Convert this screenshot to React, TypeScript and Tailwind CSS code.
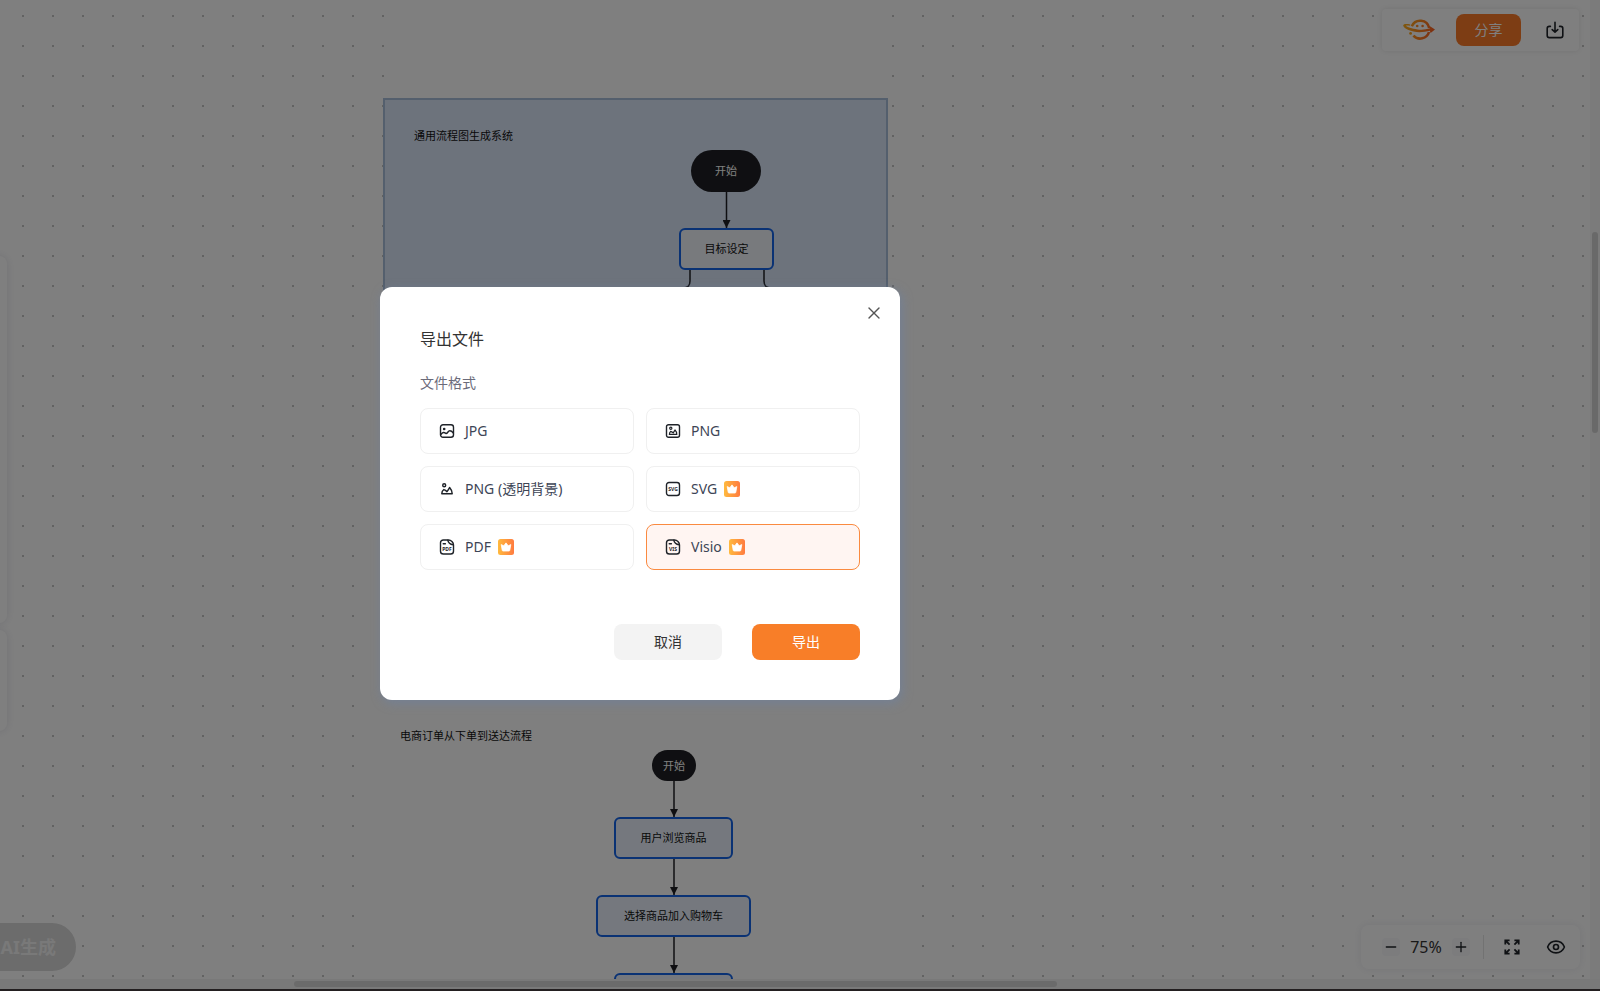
import { useState } from "react";
import type { ReactNode } from "react";
import { Eye, Minus, Plus, X } from "lucide-react";
import clsx from "clsx";

interface FlowNode {
  id: string;
  label: string;
  className: string;
}

interface ExportFormat {
  id: string;
  label: string;
  icon: ReactNode;
  premium?: boolean;
}

const FLOW_NODES: FlowNode[] = [
  {
    id: "start-1",
    label: "开始",
    className:
      "left-[691px] top-[150px] h-[42px] w-[70px] rounded-full bg-[#1e1f24] text-white",
  },
  {
    id: "goal",
    label: "目标设定",
    className:
      "left-[679px] top-[228px] h-[42px] w-[95px] rounded-md border-2 border-[#1464e8] bg-[#f0f4fb]",
  },
  {
    id: "start-2",
    label: "开始",
    className:
      "left-[652px] top-[750px] h-[31px] w-[44px] rounded-full bg-[#1e1f24] text-white",
  },
  {
    id: "browse",
    label: "用户浏览商品",
    className:
      "left-[614px] top-[817px] h-[42px] w-[119px] rounded-md border-2 border-[#1464e8] bg-[#eaf1fc]",
  },
  {
    id: "cart",
    label: "选择商品加入购物车",
    className:
      "left-[596px] top-[895px] h-[42px] w-[155px] rounded-md border-2 border-[#1464e8] bg-[#eaf1fc]",
  },
  {
    id: "next",
    label: "",
    className:
      "left-[614px] top-[973px] h-[42px] w-[119px] rounded-md border-2 border-[#1464e8] bg-[#eaf1fc]",
  },
];

const iconProps = {
  width: 16,
  height: 16,
  viewBox: "0 0 16 16",
  fill: "none",
  stroke: "#1f2329",
  strokeWidth: 1.4,
  strokeLinecap: "round" as const,
  strokeLinejoin: "round" as const,
  "aria-hidden": true,
};

function JpgIcon() {
  return (
    <svg {...iconProps}>
      <rect height="12.6" rx="2.5" width="13" x="1.5" y="1.7" />
      <circle cx="5.2" cy="6" fill="#1f2329" r="0.6" />
      <path d="M1.8 11.6 C3.6 8.8 5.2 9 7 10.6 C8.8 10.6 8.8 7.8 10.8 7.8 C12.4 7.8 13.4 8.8 14.3 10" />
    </svg>
  );
}

function PngIcon() {
  return (
    <svg {...iconProps}>
      <rect height="12.6" rx="2" width="13" x="1.5" y="1.7" />
      <circle cx="5.8" cy="5.2" r="1.1" strokeWidth="1.2" />
      <path
        d="M5.6 8.4 C4.8 9 4.4 10 4.4 11.4 H11.8 C11.8 9.6 11.2 8.2 10 7 C9.4 8 9 8.8 8.2 9.8 C7.4 9.2 6.6 8.6 5.6 8.4 Z"
        strokeWidth="1.2"
      />
    </svg>
  );
}

function TransparentPngIcon() {
  return (
    <svg {...iconProps}>
      <circle cx="5.2" cy="4.2" r="1.5" />
      <path
        d="M4.8 8.6 C3.4 9.4 2.8 11 2.8 12.8 H13.2 C13.2 10.6 12.4 8.6 10.6 6.6 C9.8 8 9 9.4 8 10.6 C7 9.6 6 9 4.8 8.6 Z"
        strokeWidth="1.5"
      />
    </svg>
  );
}

function SvgIcon() {
  return (
    <svg {...iconProps}>
      <rect height="13" rx="2.5" width="13" x="1.5" y="1.5" />
      <text
        className="font-sans font-bold"
        fill="#1f2329"
        fontSize="5"
        stroke="none"
        textAnchor="middle"
        x="8"
        y="9.6"
      >
        SVG
      </text>
    </svg>
  );
}

function DocIcon({ text }: { text: string }) {
  return (
    <svg {...iconProps}>
      <path d="M9.6 1 H4.4 C2.6 1 1.5 2.1 1.5 3.8 V12.2 C1.5 13.9 2.6 15 4.4 15 H11.6 C13.4 15 14.5 13.9 14.5 12.2 V6 C14.5 3.5 12 1 9.6 1 Z" />
      <path d="M8.8 1.2 C9.2 3.8 10.4 5.4 14.2 5.8 M4.2 4.8 H6.4" />
      <text
        className="font-sans font-bold"
        fill="#1f2329"
        fontSize="5"
        stroke="none"
        textAnchor="middle"
        x="8"
        y="12"
      >
        {text}
      </text>
    </svg>
  );
}

function CrownBadge() {
  return (
    <svg aria-hidden height="16" viewBox="0 0 16 16" width="16">
      <defs>
        <linearGradient id="crown" x1="0" x2="1" y1="0" y2="0">
          <stop offset="0" stopColor="#ffba3e" />
          <stop offset="1" stopColor="#ff7b40" />
        </linearGradient>
      </defs>
      <rect fill="url(#crown)" height="16" rx="2.5" width="16" />
      <path
        d="M3.2 5.6 L5.8 6.8 L8 3.9 L10.2 6.8 L12.8 5.6 L11.8 11.2 Q11.7 12 11 12 H5 Q4.3 12 4.2 11.2 Z"
        fill="#fff"
        stroke="#fff"
        strokeLinejoin="round"
        strokeWidth="0.8"
      />
    </svg>
  );
}

function PlanetLogo() {
  return (
    <svg aria-hidden height="22" viewBox="0 0 32 22" width="32">
      <defs>
        <linearGradient
          gradientUnits="userSpaceOnUse"
          id="planet"
          x1="0"
          x2="32"
          y1="4"
          y2="14"
        >
          <stop offset="0" stopColor="#ffb21c" />
          <stop offset="0.5" stopColor="#ff8a1e" />
          <stop offset="1" stopColor="#fb5a22" />
        </linearGradient>
      </defs>
      <path
        d="M8.8 7.2 A9.2 9.2 0 0 1 26.2 9"
        fill="none"
        stroke="url(#planet)"
        strokeWidth="2.6"
      />
      <path
        d="M26 13 A9.2 9.2 0 0 1 10.4 16.6"
        fill="none"
        stroke="url(#planet)"
        strokeWidth="2.6"
      />
      <path
        d="M7.4 5.6 C2.6 4.6 0 5.2 0.2 6.8 C0.8 9.6 8.4 13.2 16.4 13.2 C20 13.2 23.8 12.6 26.8 11.8 L27.6 14 L32 10.6 L26.6 7 L26.6 9.6 C22.8 10.6 18.6 11 14.6 10.4 C9 9.8 3.8 8 3 6.8 C3.2 6.3 4.8 6.3 6.8 6.8 Z"
        fill="url(#planet)"
      />
      <circle cx="14.2" cy="7" fill="#ff8a1e" r="1.3" />
      <circle cx="19.6" cy="7" fill="#ff7a1e" r="1.3" />
      <circle cx="7.6" cy="14.4" fill="#ffa41c" r="1.4" />
    </svg>
  );
}

function DownloadIcon() {
  return (
    <svg
      aria-hidden
      fill="none"
      height="18"
      stroke="#1f2329"
      strokeLinecap="round"
      strokeLinejoin="round"
      strokeWidth="1.6"
      viewBox="0 0 18 18"
      width="18"
    >
      <path d="M4.4 5.4 H3.4 C2.1 5.4 1.2 6.2 1.2 7.4 V14.4 C1.2 15.8 2.1 16.6 3.4 16.6 H14.6 C15.9 16.6 16.8 15.8 16.8 14.4 V7.4 C16.8 6.2 15.9 5.4 14.6 5.4 H13.6" />
      <path d="M9 1.2 V11 M6.2 8.6 L9 11.2 L11.8 8.6" />
    </svg>
  );
}

function FullscreenIcon() {
  return (
    <svg
      aria-hidden
      fill="none"
      height="16"
      stroke="#1f2329"
      strokeWidth="1.8"
      viewBox="0 0 16 16"
      width="16"
    >
      <path d="M1.3 5.6 V1.3 H5.6 M1.5 1.5 L5.6 5.6" />
      <path d="M10.4 1.3 H14.7 V5.6 M14.5 1.5 L10.4 5.6" />
      <path d="M1.3 10.4 V14.7 H5.6 M1.5 14.5 L5.6 10.4" />
      <path d="M10.4 14.7 H14.7 V10.4 M14.5 14.5 L10.4 10.4" />
    </svg>
  );
}

const FORMATS: ExportFormat[] = [
  { id: "jpg", label: "JPG", icon: <JpgIcon /> },
  { id: "png", label: "PNG", icon: <PngIcon /> },
  { id: "png-transparent", label: "PNG (透明背景)", icon: <TransparentPngIcon /> },
  { id: "svg", label: "SVG", icon: <SvgIcon />, premium: true },
  { id: "pdf", label: "PDF", icon: <DocIcon text="PDF" />, premium: true },
  { id: "visio", label: "Visio", icon: <DocIcon text="VIS" />, premium: true },
];

function Canvas() {
  return (
    <div className="relative flex-1 overflow-hidden bg-white bg-[radial-gradient(circle,#c4c4c4_1px,transparent_1.5px)] bg-size-[30px_30px] bg-position-[8px_1px]">
      {/* sheets */}
      <div className="absolute top-0 left-[386px] h-[500px] w-[502px] bg-white" />
      <div className="absolute top-[400px] bottom-0 left-[370px] w-[540px] bg-white" />

      <div className="absolute top-[98px] left-[383px] h-[400px] w-[505px] border-2 border-[#a9bedb] bg-[#dae6f9]" />
      <p className="absolute top-[128px] left-[414px] text-[11px] leading-4">
        通用流程图生成系统
      </p>
      <p className="absolute top-[728px] left-[400px] text-[11px] leading-4">
        电商订单从下单到送达流程
      </p>

      <svg
        aria-hidden
        className="absolute inset-0 size-full"
        fill="none"
        stroke="#1e1f24"
        strokeWidth="1.5"
      >
        <defs>
          <marker
            id="arrow"
            markerHeight="8"
            markerUnits="userSpaceOnUse"
            markerWidth="8"
            orient="auto"
            refX="8"
            refY="4"
          >
            <path d="M0 0 L8 4 L0 8 Z" fill="#1e1f24" stroke="none" />
          </marker>
        </defs>
        <path d="M726.5 192 V228" markerEnd="url(#arrow)" />
        <path d="M690 270 V281 Q690 288 683 288 H660" />
        <path d="M764 270 V281 Q764 288 771 288 H794" />
        <path d="M674 781 V817" markerEnd="url(#arrow)" />
        <path d="M674 859 V895" markerEnd="url(#arrow)" />
        <path d="M674 937 V973" markerEnd="url(#arrow)" />
      </svg>

      {FLOW_NODES.map((node) => (
        <div
          className={clsx(
            "absolute flex items-center justify-center whitespace-nowrap text-[11px] leading-4",
            node.className
          )}
          key={node.id}
        >
          {node.label}
        </div>
      ))}
    </div>
  );
}

function TopToolbar() {
  return (
    <div className="absolute top-[9px] right-[21px] flex h-[42px] items-center rounded bg-white pr-[15px] pl-[21px] shadow-[0_0_6px_rgba(0,0,0,0.1)]">
      <PlanetLogo />
      <button
        className="ml-[21px] h-8 w-[65px] rounded-lg bg-[#fa7a28] text-sm text-white"
        type="button"
      >
        分享
      </button>
      <button aria-label="下载" className="ml-[25px]" type="button">
        <DownloadIcon />
      </button>
    </div>
  );
}

function ZoomToolbar() {
  return (
    <div className="absolute right-5 bottom-5 flex h-[44px] items-center rounded-lg bg-white pr-[14px] pl-[21px] shadow-[0_0_8px_rgba(60,60,100,0.1)]">
      <button
        aria-label="缩小"
        className="flex size-[18px] items-center justify-center rounded bg-[#f8f8fb]"
        type="button"
      >
        <Minus className="size-4" color="#1f2329" />
      </button>
      <span className="w-[52px] text-center text-[#333]">75%</span>
      <button
        aria-label="放大"
        className="flex size-[18px] items-center justify-center rounded bg-[#f8f8fb]"
        type="button"
      >
        <Plus className="size-4" color="#1f2329" />
      </button>
      <span className="ml-[13px] h-6 w-px bg-[#e4e4e4]" />
      <button aria-label="全屏" className="ml-5" type="button">
        <FullscreenIcon />
      </button>
      <button aria-label="预览" className="ml-[26px]" type="button">
        <Eye className="size-5" color="#1f2329" strokeWidth={2} />
      </button>
    </div>
  );
}

function ExportDialog() {
  const [selected, setSelected] = useState("visio");

  return (
    <div
      aria-labelledby="export-title"
      aria-modal="true"
      className="relative w-[520px] rounded-xl bg-white p-10 shadow-[2px_3px_10px_1px_rgba(112,130,160,0.6)]"
      role="dialog"
    >
      <button
        aria-label="关闭"
        className="absolute top-4 right-4 flex size-5 items-center justify-center text-[#555]"
        type="button"
      >
        <X className="size-5" strokeWidth={1.6} />
      </button>
      <h2 className="text-base leading-6 text-[#333]" id="export-title">
        导出文件
      </h2>
      <fieldset className="mt-5">
        <legend className="text-sm leading-6 text-[#6b6b7a]">文件格式</legend>
        <div className="mt-[13px] grid grid-cols-2 gap-3">
          {FORMATS.map((format) => (
            <label
              className={clsx(
                "flex h-[46px] cursor-pointer items-center rounded-lg border pl-[18px] text-sm text-[#3d4556]",
                selected === format.id
                  ? "border-[#fa8a40] bg-[#fff5f2]"
                  : "border-[#f0f0f0] bg-white"
              )}
              key={format.id}
            >
              <input
                checked={selected === format.id}
                className="sr-only"
                name="format"
                onChange={() => setSelected(format.id)}
                type="radio"
                value={format.id}
              />
              {format.icon}
              <span className="mr-[7px] ml-2.5">{format.label}</span>
              {format.premium && <CrownBadge />}
            </label>
          ))}
        </div>
      </fieldset>
      <div className="mt-[54px] flex justify-end gap-[30px]">
        <button
          className="h-9 w-[108px] rounded-lg bg-[#f3f3f3] text-sm text-[#333]"
          type="button"
        >
          取消
        </button>
        <button
          className="h-9 w-[108px] rounded-lg bg-[#f87e28] text-sm text-white"
          type="button"
        >
          导出
        </button>
      </div>
    </div>
  );
}

export default function App() {
  return (
    <div className="flex h-screen flex-col overflow-hidden font-['Noto_Sans','Noto_Sans_CJK_SC',sans-serif] text-[#111]">
      <main className="relative flex min-h-0 flex-1 flex-col">
        <div className="flex min-h-0 flex-1">
          <Canvas />
          <div className="w-2.5 bg-[#f6f6f6] px-0.5 pt-[232px]">
            <div className="h-[201px] rounded-full bg-[#d2d2d2]" />
          </div>
        </div>
        <div className="h-2.5 bg-[#f2f2f2] py-0.5 pl-[294px]">
          <div className="h-1.5 w-[763px] rounded-full bg-[#d6d6d6]" />
        </div>

        <TopToolbar />
        <ZoomToolbar />
        <div className="absolute top-[256px] left-[-40px] h-[367px] w-[47px] rounded-lg bg-white shadow-[0_0_8px_rgba(60,60,100,0.14)]" />
        <div className="absolute top-[630px] left-[-40px] h-[101px] w-[47px] rounded-lg bg-white shadow-[0_0_8px_rgba(60,60,100,0.14)]" />
        <button
          className="absolute bottom-[18px] left-[-60px] h-12 w-[136px] rounded-full bg-[#d8d8d8] pr-5 text-right text-lg font-bold text-[#f2f2f2]"
          type="button"
        >
          AI生成
        </button>

        {/* the app area starts off-screen, so the dialog centres left of the window */}
        <div className="absolute inset-y-0 right-0 -left-80 flex items-center justify-center bg-black/50 pb-0.5">
          <ExportDialog />
        </div>
      </main>
      <footer className="h-0.5 bg-[#231f20]" />
    </div>
  );
}
